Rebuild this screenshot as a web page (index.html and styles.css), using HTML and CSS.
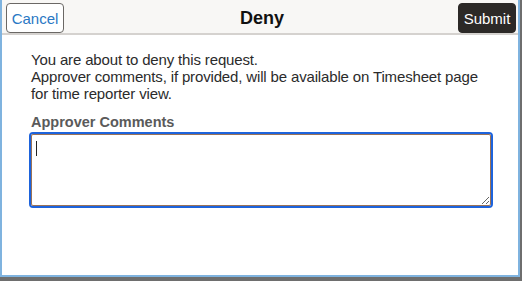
FILE: index.html
```html
<!DOCTYPE html>
<html>
<head>
<meta charset="utf-8">
<link rel="stylesheet" href="styles.css">
</head>
<body>
<div class="dialog">
  <div class="header">
    <button class="btn btn-cancel">Cancel</button>
    <h1 class="title">Deny</h1>
    <button class="btn btn-submit">Submit</button>
  </div>
  <div class="content">
    <p class="message">You are about to deny this request.<br>Approver comments, if provided, will be available on Timesheet page for time reporter view.</p>
    <label class="label" for="comments">Approver Comments</label>
    <div class="field">
      <textarea id="comments" class="comments"></textarea>
      <span class="caret"></span>
    </div>
  </div>
</div>
</body>
</html>
```
FILE: styles.css
```css
* { box-sizing: border-box; }
html, body { margin: 0; padding: 0; }
body {
  width: 522px;
  height: 281px;
  background: #6e6e6e;
  font-family: "Liberation Sans", Arial, sans-serif;
  overflow: hidden;
}
.dialog {
  width: 520px;
  height: 277px;
  background: #ffffff;
  border: 2px solid #7fb3df;
  border-top: 0;
}
.header {
  height: 35px;
  background: #f8f7f5;
  border-bottom: 2px solid #d5d2cf;
  display: flex;
  align-items: flex-start;
  justify-content: space-between;
  padding: 3px 2px 0 4px;
}
.btn {
  height: 30px;
  width: 58px;
  padding: 0;
  font-family: "Liberation Sans", Arial, sans-serif;
  font-size: 15px;
  border-radius: 4px;
  cursor: pointer;
}
.btn-cancel {
  background: #ffffff;
  border: 1px solid #6b6865;
  color: #2a78c4;
}
.btn-submit {
  background: #2c2927;
  border: 1px solid #2c2927;
  color: #ffffff;
}
.title {
  margin: 0;
  font-size: 18px;
  font-weight: bold;
  color: #111;
  line-height: 30px;
  padding-left: 2px;
}
.content {
  padding: 16px 27px 0 27px;
}
.message {
  margin: 0;
  padding-left: 2px;
  font-size: 15px;
  letter-spacing: -0.15px;
  line-height: 17px;
  color: #2b2b2b;
}
.label {
  display: block;
  margin-top: 12px;
  padding-left: 2px;
  font-size: 14.5px;
  font-weight: bold;
  line-height: 16px;
  color: #5a5a5a;
}
.field {
  position: relative;
  margin-top: 2px;
  width: 464px;
  height: 76px;
  border: 2px solid #1d63dc;
  border-radius: 4px;
}
.comments {
  display: block;
  width: 100%;
  height: 100%;
  border: 1px solid #9a7258;
  border-radius: 2px;
  margin: 0;
  padding: 4px 6px;
  font-family: "Liberation Sans", Arial, sans-serif;
  font-size: 15px;
  outline: none;
  resize: both;
  background: #fff;
}
.caret {
  position: absolute;
  left: 5px;
  top: 7px;
  width: 1px;
  height: 15px;
  background: #222;
}
```
